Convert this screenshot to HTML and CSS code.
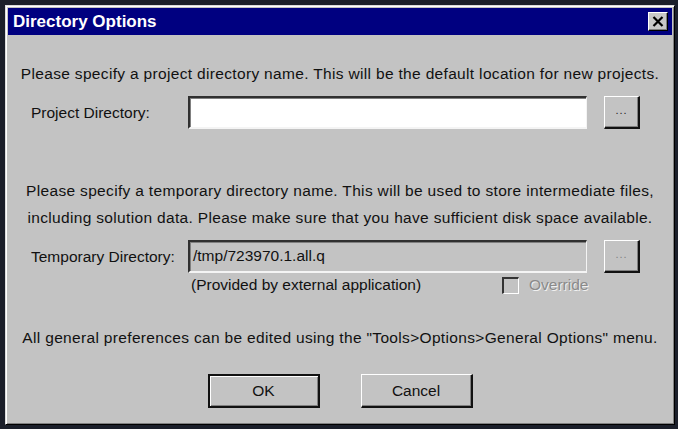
FILE: index.html
```html
<!DOCTYPE html>
<html>
<head>
<meta charset="utf-8">
<title>Directory Options</title>
<link rel="stylesheet" href="styles.css">
</head>
<body>
<div class="dlg">
	<div class="titlebar">
		<span class="title">Directory Options</span>
		<span class="closebtn"><svg width="12" height="11" viewBox="0 0 12 11"><path d="M1.5 1 L10.5 10 M10.5 1 L1.5 10" stroke="#000" stroke-width="2.2" fill="none"/></svg></span>
	</div>
	<div class="content">
		<p class="msg m1">Please specify a project directory name. This will be the default location for new projects.</p>
		<div class="row r1">
			<label class="lbl">Project Directory:</label>
			<div class="field"></div>
			<button class="browse">...</button>
		</div>
		<p class="msg m2">Please specify a temporary directory name. This will be used to store intermediate files,<br>including solution data. Please make sure that you have sufficient disk space available.</p>
		<div class="row r2">
			<label class="lbl">Temporary Directory:</label>
			<div class="field off">/tmp/723970.1.all.q</div>
			<button class="browse dis">...</button>
		</div>
		<div class="note">
			<span></span>
			<span class="prov">(Provided by external application)</span>
			<span class="chk"><i class="box"></i><span class="grey">Override</span></span>
		</div>
		<p class="msg m3">All general preferences can be edited using the "Tools&gt;Options&gt;General Options" menu.</p>
		<div class="btns">
			<button class="pb def">OK</button>
			<button class="pb">Cancel</button>
		</div>
	</div>
</div>
</body>
</html>
```

FILE: styles.css
```css
*{box-sizing:border-box;}
html,body{margin:0;padding:0;}
body{background:#1b1f2a;width:678px;height:429px;overflow:hidden;font-family:"Liberation Sans", Arial, sans-serif;font-size:15.5px;color:#111;}

/* window frame */
.dlg{margin:5px 0 0 5px;width:670px;height:420px;background:#c3c3c3;padding:2px;
	border-top:1px solid #dcdcdc;border-left:1px solid #dcdcdc;border-right:1px solid #000;border-bottom:1px solid #000;
	box-shadow:inset 1px 1px 0 #fff, inset -1px -1px 0 #808080;
	display:flex;flex-direction:column;}
.titlebar{height:27px;background:#000080;display:flex;align-items:center;justify-content:space-between;padding:0 4px 0 5px;flex:none;}
.title{color:#fff;font-weight:bold;font-size:17px;}
.closebtn{width:20px;height:19px;background:#c8c8c8;display:flex;align-items:center;justify-content:center;
	border-top:1px solid #fff;border-left:1px solid #fff;border-right:1px solid #000;border-bottom:1px solid #000;
	box-shadow:inset -1px -1px 0 #808080;}

.content{flex:1;display:flex;flex-direction:column;}
.msg{margin:0;text-align:center;line-height:20px;letter-spacing:0.33px;}
.m1{margin-top:29px;}
.m2{margin-top:48px;line-height:27px;}
.m3{margin-top:33px;}

.row{display:flex;align-items:center;height:33px;padding-left:23px;}
.r1{margin-top:12px;}
.r2{margin-top:9px;}
.lbl{width:157px;}
.field{width:399px;height:33px;background:#fff;padding:5px 0 0 3px;
	border-top:2px solid #303030;border-left:2px solid #303030;border-right:1px solid #f4f4f4;border-bottom:2px solid #f4f4f4;
	box-shadow:inset 1px 1px 0 #808080;}
.field.off{background:#c3c3c3;}
.browse{margin-left:17px;width:36px;height:33px;padding:0 0 4px;background:#c3c3c3;font-family:inherit;font-size:11px;color:#222;letter-spacing:1px;
	border-top:1px solid #fff;border-left:1px solid #fff;border-right:2px solid #111;border-bottom:2px solid #111;
	box-shadow:inset -1px -1px 0 #808080;}
.browse.dis{color:#808080;}

.note{display:grid;grid-template-columns:180px 314px auto;height:20px;align-items:center;margin-top:2px;}
.prov{padding-left:3px;}
.chk{display:flex;align-items:center;}
.box{display:block;width:17px;height:17px;background:#c3c3c3;
	border-top:2px solid #333;border-left:2px solid #333;border-right:1px solid #fff;border-bottom:1px solid #fff;}
.grey{margin-left:10px;color:#8a8a8a;text-shadow:1px 1px 0 #f0f0f0;}

.btns{margin-top:26px;display:flex;justify-content:center;gap:41px;}
.pb{width:112px;height:34px;background:#c3c3c3;font-family:inherit;font-size:15.5px;color:#111;padding:0;
	border-top:1px solid #fff;border-left:1px solid #fff;border-right:2px solid #111;border-bottom:2px solid #111;
	box-shadow:inset -1px -1px 0 #808080;}
.pb.def{border:2px solid #111;box-shadow:inset 1px 1px 0 #fff, inset -1px -1px 0 #808080;}
```
